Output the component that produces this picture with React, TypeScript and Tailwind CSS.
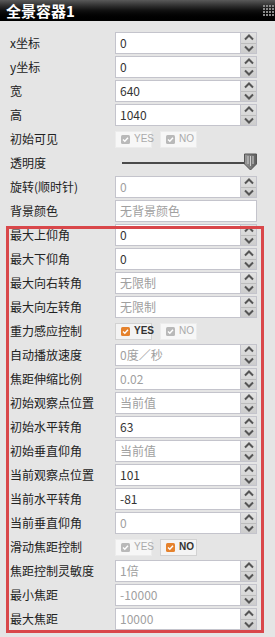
import type { ReactNode } from 'react'

const FONT = { fontFamily: '"Noto Sans CJK SC", "Liberation Sans", sans-serif' }

type Row =
  | { kind: 'num'; label: string; value: string; muted?: boolean }
  | { kind: 'text'; label: string; value: string }
  | { kind: 'check'; label: string; on: 'yes' | 'no' | null }
  | { kind: 'slider'; label: string }

const top: Row[] = [
  { kind: 'num', label: 'x坐标', value: '0' },
  { kind: 'num', label: 'y坐标', value: '0' },
  { kind: 'num', label: '宽', value: '640' },
  { kind: 'num', label: '高', value: '1040' },
  { kind: 'check', label: '初始可见', on: null },
  { kind: 'slider', label: '透明度' },
  { kind: 'num', label: '旋转(顺时针)', value: '0', muted: true },
  { kind: 'text', label: '背景颜色', value: '无背景颜色' },
]

const boxed: Row[] = [
  { kind: 'num', label: '最大上仰角', value: '0' },
  { kind: 'num', label: '最大下仰角', value: '0' },
  { kind: 'num', label: '最大向右转角', value: '无限制', muted: true },
  { kind: 'num', label: '最大向左转角', value: '无限制', muted: true },
  { kind: 'check', label: '重力感应控制', on: 'yes' },
  { kind: 'num', label: '自动播放速度', value: '0度／秒', muted: true },
  { kind: 'num', label: '焦距伸缩比例', value: '0.02', muted: true },
  { kind: 'num', label: '初始观察点位置', value: '当前值', muted: true },
  { kind: 'num', label: '初始水平转角', value: '63' },
  { kind: 'num', label: '初始垂直仰角', value: '当前值', muted: true },
  { kind: 'num', label: '当前观察点位置', value: '101' },
  { kind: 'num', label: '当前水平转角', value: '-81' },
  { kind: 'num', label: '当前垂直仰角', value: '0', muted: true },
  { kind: 'check', label: '滑动焦距控制', on: 'no' },
  { kind: 'num', label: '焦距控制灵敏度', value: '1倍', muted: true },
  { kind: 'num', label: '最小焦距', value: '-10000', muted: true },
  { kind: 'num', label: '最大焦距', value: '10000', muted: true },
]

function Chevron({ up }: { up?: boolean }) {
  return (
    <svg width="10" height="7" viewBox="0 0 10 7">
      <path
        d={up ? 'M1 5.5 L5 1.5 L9 5.5' : 'M1 1.5 L5 5.5 L9 1.5'}
        fill="none"
        stroke="#555"
        strokeWidth="2"
      />
    </svg>
  )
}

function Spinner() {
  return (
    <div className="flex h-full w-[16px] flex-col border border-l-0 border-[#c4c4cc] bg-gradient-to-b from-[#e2e2e2] to-[#cdcdcd]">
      <div className="flex flex-1 items-center justify-center border-b border-[#bdbdbd]">
        <Chevron up />
      </div>
      <div className="flex flex-1 items-center justify-center">
        <Chevron />
      </div>
    </div>
  )
}

function Field({ value, muted, spin }: { value: string; muted?: boolean; spin?: boolean }) {
  return (
    <div className="flex h-[22px] w-[142px]">
      <div
        className={`flex flex-1 items-center border border-[#c4c4cc] bg-white pl-[4px] text-[12px] ${
          muted ? 'text-[#a0a0a0]' : 'text-[#333]'
        }`}
      >
        {value}
      </div>
      {spin && <Spinner />}
    </div>
  )
}

function Check({ label, on }: { label: string; on: boolean }) {
  return (
    <div
      className={`flex h-[17px] w-[37px] items-center gap-[4px] border pl-[5px] ${
        on ? 'border-[#d2d2d2] bg-[#f4f4f4]' : 'border-[#ececec] bg-[#f7f7f7]'
      }`}
    >
      <svg className="shrink-0" width="9" height="9" viewBox="0 0 9 9">
        <rect width="9" height="9" rx="1.5" fill={on ? '#e5822d' : '#b9b9b9'} />
        <path d="M2 4.6 L3.8 6.3 L7 2.7" fill="none" stroke="#fff" strokeWidth="1.4" />
      </svg>
      <span
        className={`text-[10px] leading-none ${on ? 'font-bold text-[#333]' : 'text-[#aaa]'}`}
        style={{ fontFamily: '"Liberation Sans", sans-serif' }}
      >
        {label}
      </span>
    </div>
  )
}

function Slider() {
  return (
    <div className="relative flex h-[22px] w-[142px] items-center">
      <div className="ml-[7px] h-[2px] w-[128px] bg-[#4a4a4a]" />
      <svg className="absolute left-[129px] top-[1px]" width="13" height="18" viewBox="0 0 13 18">
        <defs>
          <linearGradient id="hg" x1="0" y1="0" x2="1" y2="0">
            <stop offset="0" stopColor="#9a9a9a" />
            <stop offset="0.5" stopColor="#7a7a7a" />
            <stop offset="1" stopColor="#5e5e5e" />
          </linearGradient>
        </defs>
        <path d="M0.5 1 H12.5 V11 L6.5 17 L0.5 11 Z" fill="url(#hg)" stroke="#555" />
        <path d="M4 3 V11 M6.5 3 V13 M9 3 V11" stroke="#d0d0d0" strokeWidth="1" />
      </svg>
    </div>
  )
}

function Line({ row }: { row: Row }) {
  let control: ReactNode
  if (row.kind === 'num') control = <Field value={row.value} muted={row.muted} spin />
  else if (row.kind === 'text') control = <Field value={row.value} muted />
  else if (row.kind === 'slider') control = <Slider />
  else
    control = (
      <div className="flex gap-[8px]">
        <Check label="YES" on={row.on === 'yes'} />
        <Check label="NO" on={row.on === 'no'} />
      </div>
    )

  return (
    <div className="flex h-[24px] items-center">
      <div className="w-[115px] pl-[10px] text-[12px] text-[#222]">{row.label}</div>
      {control}
    </div>
  )
}

export default function App() {
  return (
    <div className="h-[637px] w-[275px] overflow-hidden bg-[#e5e5e5]" style={FONT}>
      <div className="flex h-[21px] items-center justify-between bg-gradient-to-b from-[#5a5a5a] via-[#111] to-[#000] pl-[6px]">
        <span className="text-[15px] font-bold leading-none text-white">全景容器1</span>
        <div className="mr-[1px] grid grid-cols-4 gap-[1px]">
          {Array.from({ length: 16 }).map((_, i) => (
            <div key={i} className="h-[2px] w-[2px] bg-[#8a8a8a]" />
          ))}
        </div>
      </div>
      <div className="relative pt-[10px]">
        {top.map((r) => (
          <Line key={r.label} row={r} />
        ))}
        {boxed.map((r) => (
          <Line key={r.label} row={r} />
        ))}
        <div className="pointer-events-none absolute left-[6px] top-[205px] h-[407px] w-[258px] border-[3px] border-[#d9474a]" />
      </div>
    </div>
  )
}
